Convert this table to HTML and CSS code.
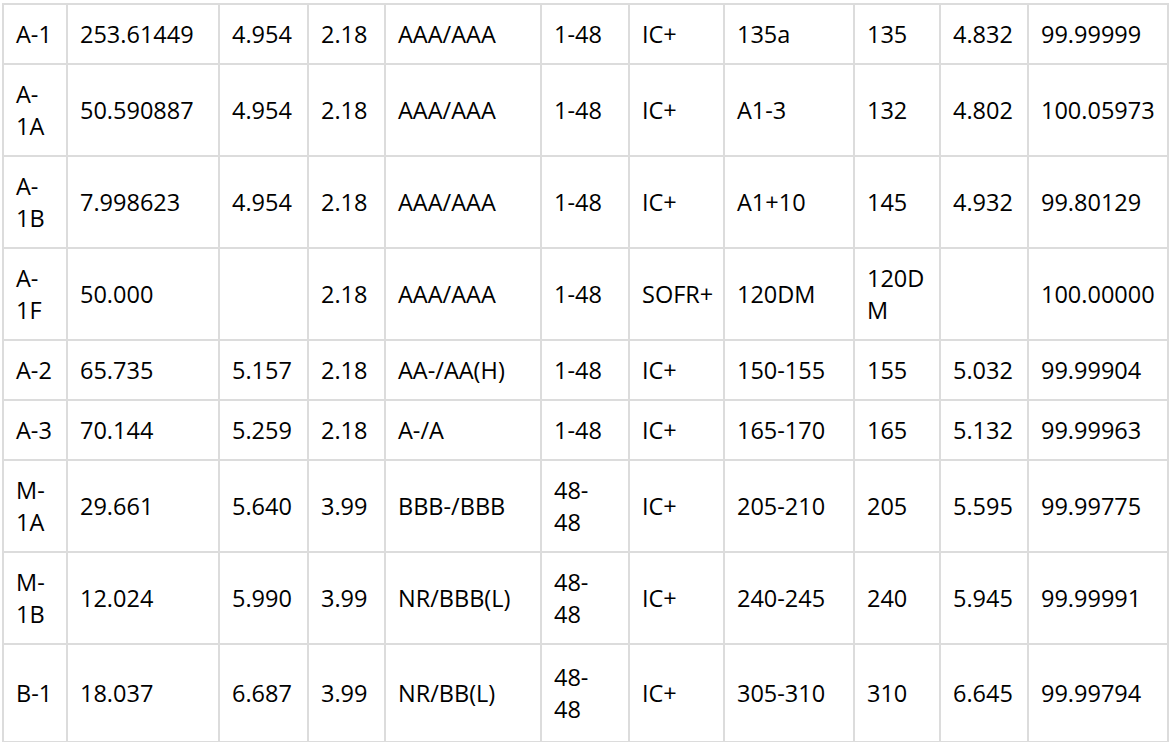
FILE: index.html
```html
<!DOCTYPE html>
<html lang="en">
<head>
<meta charset="utf-8">
<title>Tranche table</title>
<link rel="stylesheet" href="styles.css">
</head>
<body>
<div class="grid">
  <div class="c">A-1</div><div class="c">253.61449</div><div class="c">4.954</div><div class="c">2.18</div><div class="c">AAA/AAA</div><div class="c">1-48</div><div class="c">IC+</div><div class="c">135a</div><div class="c">135</div><div class="c">4.832</div><div class="c">99.99999</div>
  <div class="c">A-1A</div><div class="c">50.590887</div><div class="c">4.954</div><div class="c">2.18</div><div class="c">AAA/AAA</div><div class="c">1-48</div><div class="c">IC+</div><div class="c">A1-3</div><div class="c">132</div><div class="c">4.802</div><div class="c">100.05973</div>
  <div class="c">A-1B</div><div class="c">7.998623</div><div class="c">4.954</div><div class="c">2.18</div><div class="c">AAA/AAA</div><div class="c">1-48</div><div class="c">IC+</div><div class="c">A1+10</div><div class="c">145</div><div class="c">4.932</div><div class="c">99.80129</div>
  <div class="c">A-1F</div><div class="c">50.000</div><div class="c"></div><div class="c">2.18</div><div class="c">AAA/AAA</div><div class="c">1-48</div><div class="c">SOFR+</div><div class="c">120DM</div><div class="c">120DM</div><div class="c"></div><div class="c">100.00000</div>
  <div class="c">A-2</div><div class="c">65.735</div><div class="c">5.157</div><div class="c">2.18</div><div class="c">AA-/AA(H)</div><div class="c">1-48</div><div class="c">IC+</div><div class="c">150-155</div><div class="c">155</div><div class="c">5.032</div><div class="c">99.99904</div>
  <div class="c">A-3</div><div class="c">70.144</div><div class="c">5.259</div><div class="c">2.18</div><div class="c">A-/A</div><div class="c">1-48</div><div class="c">IC+</div><div class="c">165-170</div><div class="c">165</div><div class="c">5.132</div><div class="c">99.99963</div>
  <div class="c">M-1A</div><div class="c">29.661</div><div class="c">5.640</div><div class="c">3.99</div><div class="c">BBB-/BBB</div><div class="c">48-<br>48</div><div class="c">IC+</div><div class="c">205-210</div><div class="c">205</div><div class="c">5.595</div><div class="c">99.99775</div>
  <div class="c">M-1B</div><div class="c">12.024</div><div class="c">5.990</div><div class="c">3.99</div><div class="c">NR/BBB(L)</div><div class="c">48-<br>48</div><div class="c">IC+</div><div class="c">240-245</div><div class="c">240</div><div class="c">5.945</div><div class="c">99.99991</div>
  <div class="c">B-1</div><div class="c">18.037</div><div class="c">6.687</div><div class="c">3.99</div><div class="c">NR/BB(L)</div><div class="c">48-<br>48</div><div class="c">IC+</div><div class="c">305-310</div><div class="c">310</div><div class="c">6.645</div><div class="c">99.99794</div>
</div>
</body>
</html>
```

FILE: styles.css
```css
html, body {
  margin: 0;
  padding: 0;
  background: #ffffff;
}

body {
  font-family: "Open Sans", "Liberation Sans", sans-serif;
  font-size: 23.5px;
  line-height: 32px;
  color: #000000;
}

.grid {
  display: grid;
  grid-template-columns: 62px 150px 87px 75px 154px 86px 93px 128px 84px 86px 138px;
  gap: 2px;
  padding: 2px;
  margin: 3px 0 0 2px;
  background: #dcdcdc;
  width: max-content;
}

.c {
  background: #ffffff;
  display: flex;
  align-items: center;
  padding: 13px 6px 13px 12px;
  overflow-wrap: anywhere;
  min-width: 0;
}

.c:nth-last-child(-n+11) {
  padding-top: 16px;
  padding-bottom: 16px;
}
```
